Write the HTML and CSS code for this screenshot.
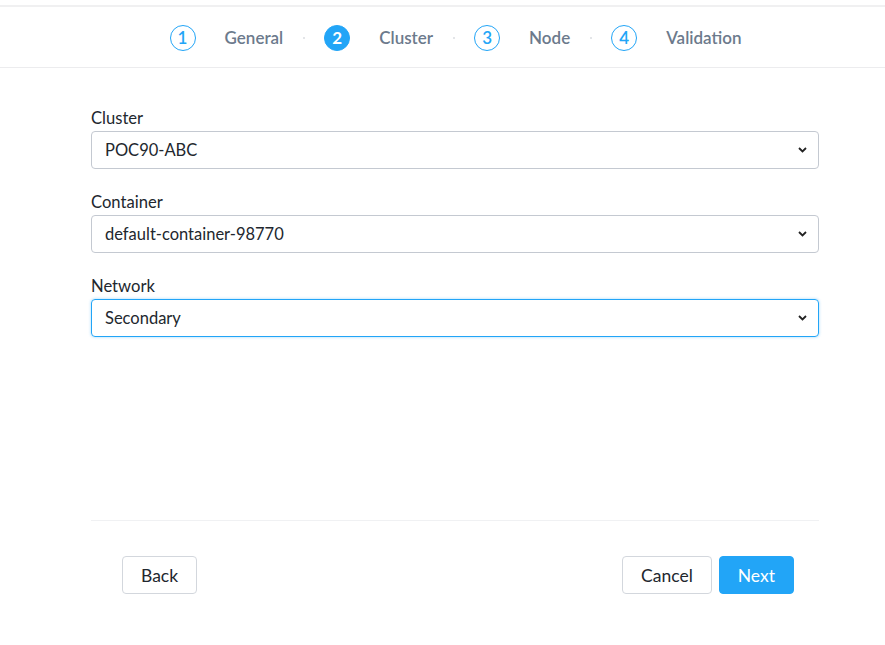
FILE: index.html
```html
<!DOCTYPE html>
<html>
<head>
<meta charset="utf-8">
<link rel="stylesheet" href="styles.css">
</head>
<body>
<div class="topstrip"></div>
<header class="steps">
  <div class="step"><span class="num">1</span><span class="label">General</span></div>
  <span class="sep"></span>
  <div class="step active"><span class="num">2</span><span class="label">Cluster</span></div>
  <span class="sep"></span>
  <div class="step"><span class="num">3</span><span class="label">Node</span></div>
  <span class="sep"></span>
  <div class="step"><span class="num">4</span><span class="label">Validation</span></div>
</header>
<main class="form">
  <div class="field">
    <div class="flabel">Cluster</div>
    <div class="select"><span>POC90-ABC</span><svg class="chev" width="9" height="6" viewBox="0 0 9 6"><path d="M1 1l3.5 3.5L8 1" fill="none" stroke="#222" stroke-width="1.8"/></svg></div>
  </div>
  <div class="field">
    <div class="flabel">Container</div>
    <div class="select"><span>default-container-98770</span><svg class="chev" width="9" height="6" viewBox="0 0 9 6"><path d="M1 1l3.5 3.5L8 1" fill="none" stroke="#222" stroke-width="1.8"/></svg></div>
  </div>
  <div class="field">
    <div class="flabel">Network</div>
    <div class="select focus"><span>Secondary</span><svg class="chev" width="9" height="6" viewBox="0 0 9 6"><path d="M1 1l3.5 3.5L8 1" fill="none" stroke="#222" stroke-width="1.8"/></svg></div>
  </div>
  <div class="footer">
    <button class="btn">Back</button>
    <div class="right">
      <button class="btn">Cancel</button>
      <button class="btn primary">Next</button>
    </div>
  </div>
</main>
</body>
</html>
```
FILE: styles.css
```css
* { box-sizing: border-box; }
body {
  margin: 0;
  background: #fff;
  font-family: "Lato", "Open Sans", sans-serif;
  color: #22272e;
}
.topstrip {
  height: 7px;
  border-bottom: 2px solid #f0f0f1;
}
.steps {
  height: 61px;
  border-bottom: 1px solid #ececee;
  display: flex;
  align-items: center;
  justify-content: center;
  padding-left: 26px;
  padding-top: 1px;
}
.step {
  display: flex;
  align-items: center;
  gap: 29px;
}
.num {
  width: 26px;
  height: 26px;
  border-radius: 50%;
  border: 1.5px solid #22a5f7;
  color: #22a5f7;
  display: flex;
  align-items: center;
  justify-content: center;
  font-size: 17px;
  font-weight: 600;
}
.step.active .num {
  background: #22a5f7;
  color: #fff;
  font-weight: 700;
}
.label {
  font-size: 17px;
  font-weight: 600;
  color: #6c7a8c;
}
.sep {
  width: 2px;
  height: 2px;
  background: #e3e5e8;
  margin: 0 19px 0 20px;
}
.form {
  margin-left: 91px;
  width: 728px;
  padding-top: 40px;
}
.field {
  height: 84px;
}
.flabel {
  font-size: 16.6px;
  line-height: 21px;
  margin-bottom: 2px;
  color: #22272e;
}
.select {
  height: 38px;
  border: 1px solid #c4c9d1;
  border-radius: 4px;
  display: flex;
  align-items: center;
  justify-content: space-between;
  padding: 0 11px 0 13px;
  font-size: 16.5px;
  color: #22272e;
}
.select.focus {
  border-color: #22a5f7;
  box-shadow: 0 0 3px rgba(34,165,247,0.45);
}
.footer {
  margin-top: 160px;
  border-top: 1px solid #f0f1f3;
  padding: 35px 25px 0 31px;
  display: flex;
  justify-content: space-between;
}
.right {
  display: flex;
  gap: 7px;
}
.btn {
  height: 38px;
  border: 1px solid #d3d7dd;
  border-radius: 4px;
  background: #fff;
  font-family: inherit;
  font-size: 17.5px;
  color: #22272e;
  padding: 0 18px;
}
.btn.primary {
  background: #22a5f7;
  border-color: #22a5f7;
  color: #fff;
}
```
